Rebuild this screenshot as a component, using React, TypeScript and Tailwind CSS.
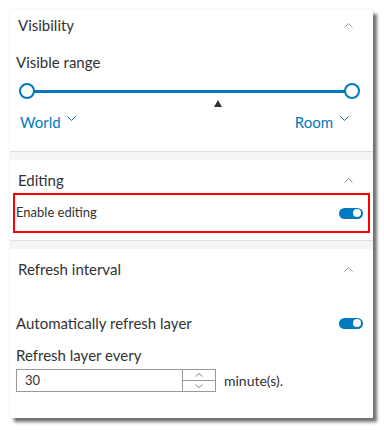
const font = { fontFamily: '"Lato", "Noto Sans", sans-serif' };

const Chevron = ({
  up = false,
  w,
  h,
  className,
}: {
  up?: boolean;
  w: number;
  h: number;
  className?: string;
}) => (
  <svg width={w} height={h} viewBox={`0 0 ${w} ${h}`} className={className} fill="none">
    <polyline
      points={up ? `0.5,${h - 0.5} ${w / 2},0.5 ${w - 0.5},${h - 0.5}` : `0.5,0.5 ${w / 2},${h - 0.5} ${w - 0.5},0.5`}
      stroke="currentColor"
      strokeWidth={1}
    />
  </svg>
);

const Toggle = () => (
  <div className="w-[24px] h-[11px] rounded-full bg-[#0079c1] flex items-center justify-end pr-[2px]">
    <div className="w-[8px] h-[8px] rounded-full bg-white" />
  </div>
);

const SectionHeader = ({ title }: { title: string }) => (
  <div className="flex items-center justify-between pl-[8px] pr-[20px] h-[40px]">
    <span className="text-[15px] text-[#323232]">{title}</span>
    <Chevron up w={9} h={5} className="text-[#999]" />
  </div>
);

const Gap = () => (
  <div className="h-[9px] bg-[#f5f5f5] border-t border-[#e0e0e0]" />
);

export default function App() {
  return (
    <div className="bg-white w-[384px] h-[430px] pt-[10px] pl-[10px]" style={font}>
      <div className="w-[363px] h-[408px] bg-white shadow-[4px_4px_3px_rgba(0,0,0,0.55),0_0_2px_rgba(0,0,0,0.12)] flex flex-col">
        {/* Visibility */}
        <div className="h-[141px] flex flex-col">
          <div className="flex items-center justify-between pl-[8px] pr-[20px] h-[31px]">
            <span className="text-[15px] text-[#323232]">Visibility</span>
            <Chevron up w={9} h={5} className="text-[#999]" />
          </div>
          <div className="pl-[6px] mt-[11px] text-[15px] text-[#323232] leading-[20px]">Visible range</div>
          <div className="relative ml-[9px] mr-[13px] mt-[11px] h-[16px] flex items-center">
            <div className="absolute left-[8px] right-[8px] h-[3px] bg-[#0079c1]" />
            <div className="relative w-[16px] h-[16px] rounded-full border-2 border-[#0079c1] bg-white" />
            <div className="flex-1" />
            <div className="relative w-[16px] h-[16px] rounded-full border-2 border-[#0079c1] bg-white" />
          </div>
          <div className="flex justify-center mt-[1px] pl-[52px]">
            <div className="w-0 h-0 border-l-[4px] border-r-[4px] border-b-[7px] border-l-transparent border-r-transparent border-b-[#323232]" />
          </div>
          <div className="flex justify-between items-center mt-[4px] pl-[10px] pr-[24px] text-[15px] text-[#0079c1]">
            <div className="flex items-center gap-[6px]">
              <span>World</span>
              <Chevron w={9} h={5} className="-mt-[8px]" />
            </div>
            <div className="flex items-center gap-[7px]">
              <span>Room</span>
              <Chevron w={9} h={5} className="-mt-[8px]" />
            </div>
          </div>
        </div>
        <Gap />
        {/* Editing */}
        <div className="h-[80px] flex flex-col">
          <SectionHeader title="Editing" />
          <div className="mx-[3px] mt-[-7px] h-[40px] border-2 border-[#ff0000] flex items-center justify-between pl-[1px] pr-[5px]">
            <span className="text-[13px] text-[#323232]">Enable editing</span>
            <Toggle />
          </div>
        </div>
        <Gap />
        {/* Refresh interval */}
        <div className="flex-1 flex flex-col">
          <SectionHeader title="Refresh interval" />
          <div className="flex items-center justify-between pl-[6px] pr-[10px] mt-[23px]">
            <span className="text-[15px] text-[#323232]">Automatically refresh layer</span>
            <Toggle />
          </div>
          <div className="pl-[6px] mt-[9px] text-[15px] text-[#323232]">Refresh layer every</div>
          <div className="flex items-center pl-[6px] mt-[3px]">
            <div className="w-[200px] h-[23px] border border-[#999] flex">
              <div className="flex-1 flex items-center pl-[8px] text-[13px] text-[#323232]">30</div>
              <div className="w-[33px] border-l border-[#999] flex flex-col">
                <div className="flex-1 flex items-center justify-center border-b border-[#999]">
                  <Chevron up w={8} h={4} className="text-[#888]" />
                </div>
                <div className="flex-1 flex items-center justify-center">
                  <Chevron w={8} h={4} className="text-[#888]" />
                </div>
              </div>
            </div>
            <span className="ml-[8px] text-[14px] text-[#323232]">minute(s).</span>
          </div>
        </div>
      </div>
    </div>
  );
}
